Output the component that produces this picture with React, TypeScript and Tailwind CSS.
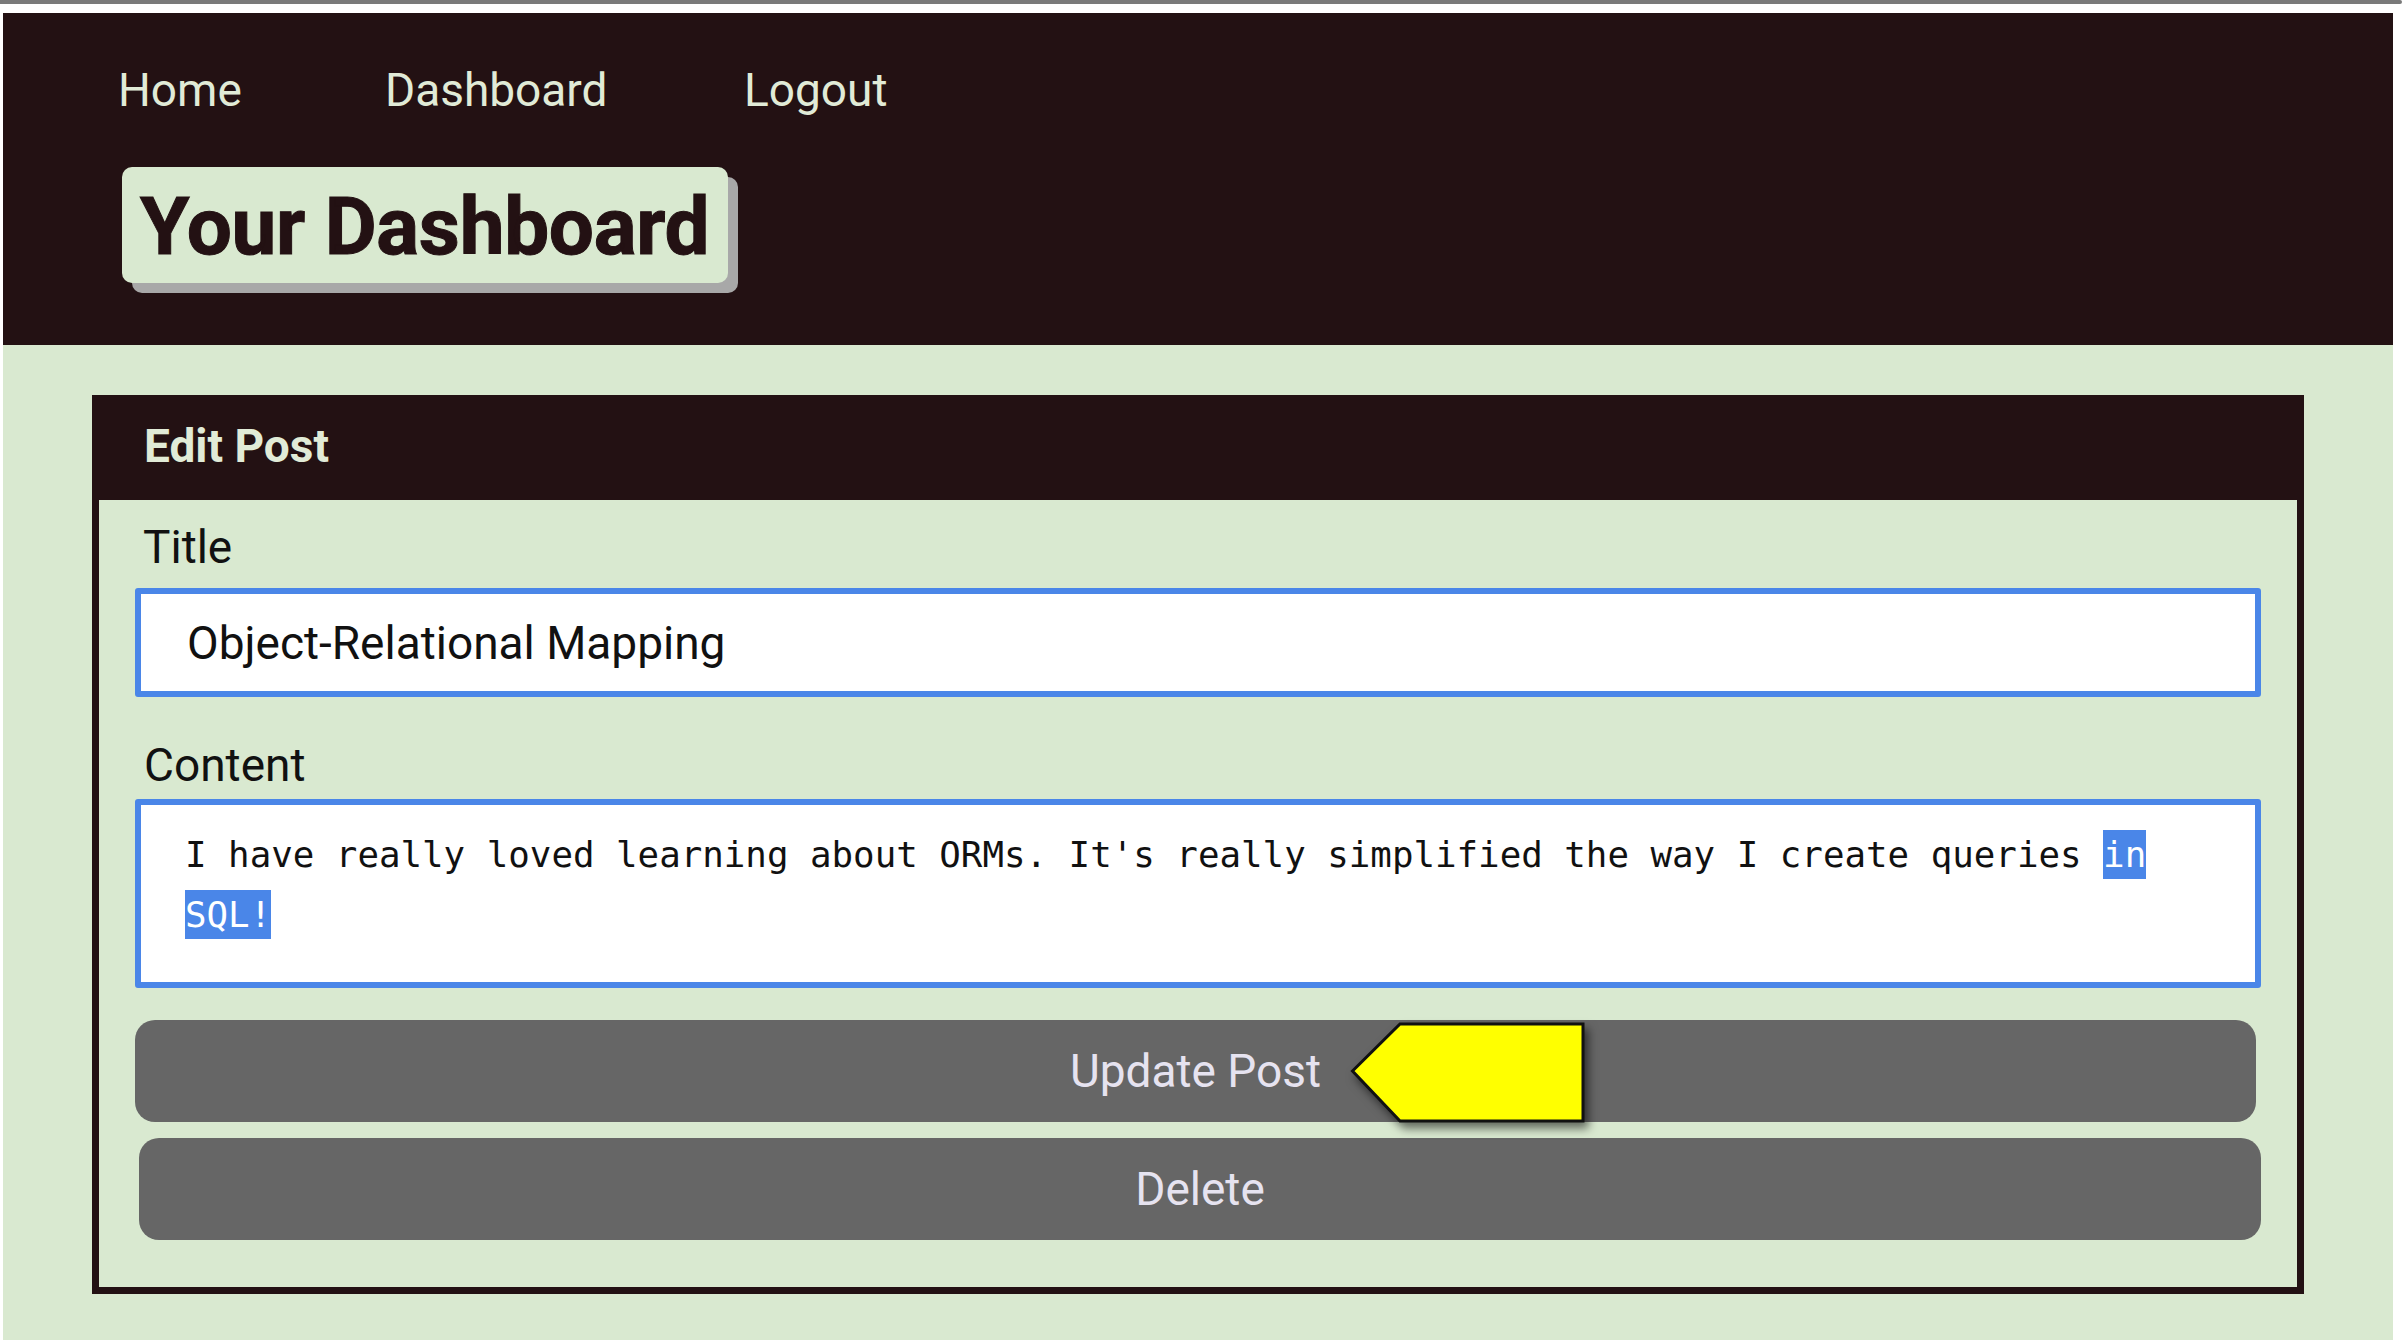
import React from "react";

const navLinks = [
  { name: "Home", width: "w-[267px]" },
  { name: "Dashboard", width: "w-[359px]" },
  { name: "Logout", width: "" },
];

// yellow callout pointing at the Update button
const PointerArrow = () => (
  <svg
    width="238"
    height="104"
    viewBox="0 0 238 104"
    className="absolute left-[1215px] top-[1px] drop-shadow-[4px_6px_5px_rgba(0,0,0,0.55)]"
  >
    <polygon
      points="2.5,50 50,3 233,3 233,100 50,100"
      fill="#ffff00"
      stroke="#111111"
      strokeWidth="3"
      strokeLinejoin="miter"
    />
  </svg>
);

export default function App() {
  return (
    <div className="min-h-screen w-full bg-white font-['Roboto',sans-serif]">
      <div className="h-[4px] w-full rounded-r-full bg-[#7a7a7a]" />
      <div className="pt-[9px] pl-[3px] pr-[9px] pb-[2px]">
        {/* Header */}
        <header className="h-[332px] bg-[#231113] pt-[50px] pl-[115px]">
          <nav className="flex text-[46px] leading-[54px] text-[#e1ebd7]">
            {navLinks.map((link) => (
              <a key={link.name} href="#" className={link.width}>
                {link.name}
              </a>
            ))}
          </nav>
          <div className="mt-[50px] ml-[4px] flex h-[116px] w-[606px] items-center rounded-[10px] bg-[#d9e9d0] pl-[18px] pt-[4px] shadow-[10px_10px_0_#a8a8a8]">
            <h1 className="text-[80px] font-bold leading-[94px] tracking-[-0.3px] text-[#231113] [-webkit-text-stroke:1px_#231113]">
              Your Dashboard
            </h1>
          </div>
        </header>

        {/* Main */}
        <main className="h-[995px] bg-[#d9e9d0] px-[89px] pt-[50px]">
          <section className="border-[7px] border-t-0 border-[#231113] bg-[#d9e9d0]">
            <div className="h-[105px] bg-[#231113] pl-[45px] pt-[24px]">
              <h2 className="text-[46px] font-bold leading-[54px] text-[#e1ebd7]">Edit Post</h2>
            </div>

            <form className="flex flex-col px-[36px] pt-[20px] pb-[47px]">
              <label className="pl-[8px] text-[46px] leading-[54px] text-[#111111]">Title</label>
              <div className="mt-[14px] flex h-[109px] items-center rounded-[3px] border-[6px] border-[#4a86e8] bg-white pl-[46px] text-[46px] leading-[54px] text-[#111111]">
                Object-Relational Mapping
              </div>

              <label className="mt-[41px] pl-[9px] text-[46px] leading-[54px] text-[#111111]">Content</label>
              <div className="mt-[7px] h-[189px] rounded-[3px] border-[6px] border-[#4a86e8] bg-white pl-[44px] pr-[44px] pt-[20px] font-['DejaVu_Sans_Mono',monospace] text-[35.8px] leading-[60px] text-[#111111]">
                I have really loved learning about ORMs. It's really simplified the way I create queries{" "}
                <span className="bg-[#4a86e8] py-[4px] text-white">in</span>{" "}
                <span className="bg-[#4a86e8] py-[4px] text-white">SQL!</span>
              </div>

              <div className="relative mt-[32px] mr-[5px]">
                <button
                  type="button"
                  className="flex h-[102px] w-full items-center justify-center rounded-[20px] bg-[#666666] text-[46px] text-[#e6e3f0]"
                >
                  Update Post
                </button>
                <PointerArrow />
              </div>
              <button
                type="button"
                className="mt-[16px] ml-[4px] flex h-[102px] items-center justify-center rounded-[20px] bg-[#666666] text-[46px] text-[#e6e3f0]"
              >
                Delete
              </button>
            </form>
          </section>
        </main>
      </div>
    </div>
  );
}
